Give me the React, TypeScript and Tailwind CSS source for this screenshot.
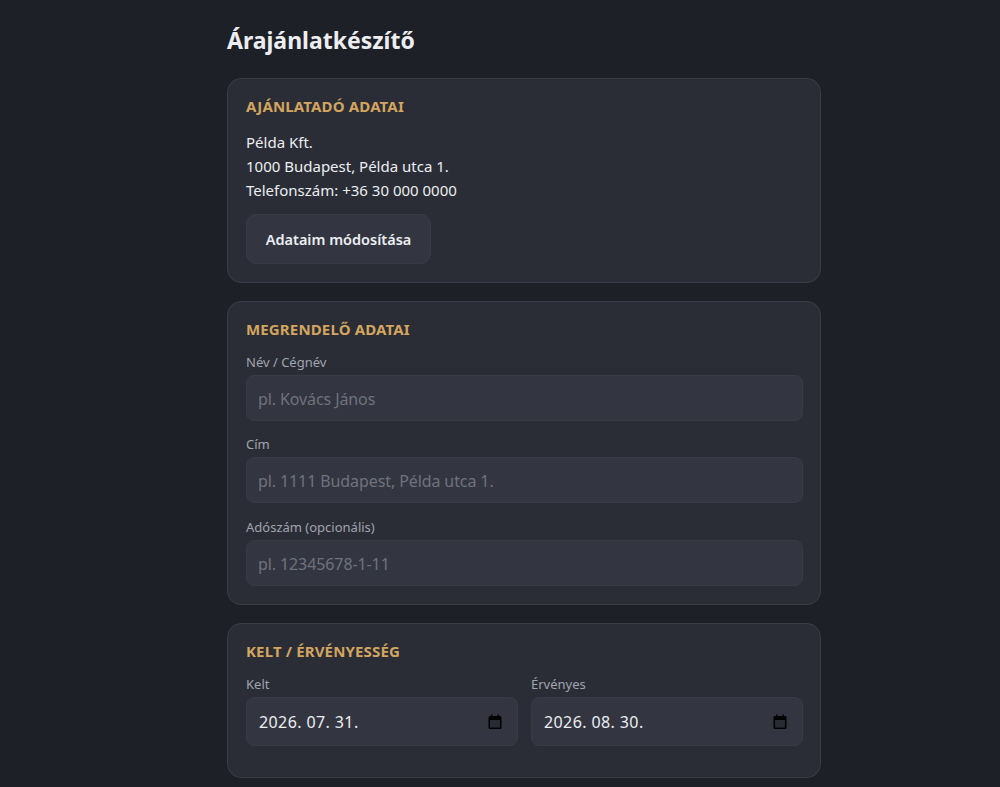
const font = { fontFamily: '"Noto Sans", "Open Sans", sans-serif' };

function Card({ title, className, children }: { title: string; className: string; children: React.ReactNode }) {
  return (
    <section className={`rounded-[14px] border border-[#3a3d47] bg-[#2a2d36] pr-[17px] pl-[18px] ${className}`}>
      <h2 className="text-[15px] leading-[20px] font-bold tracking-[0.15px] text-[#d4a55f] uppercase">{title}</h2>
      {children}
    </section>
  );
}

function Field({ label, placeholder, className }: { label: string; placeholder: string; className: string }) {
  return (
    <div className={className}>
      <label className="block h-[18px] text-[13px] leading-[20px] text-[#a0a4ae]">{label}</label>
      <input
        readOnly
        placeholder={placeholder}
        className="mt-[5px] block h-[46px] w-full rounded-[8px] border border-[#383b46] bg-[#333641] px-[11px] pt-[2px] text-[16px] tracking-[-0.1px] text-white outline-none placeholder:text-[#6f727c]"
      />
    </div>
  );
}

function CalendarIcon() {
  return (
    <svg width="16" height="16" viewBox="0 0 16 16" className="shrink-0">
      <rect x="3" y="6" width="10" height="7.5" fill="#000" fillOpacity="0.2" />
      <path
        d="M4 0.5h1.5V2h5V0.5H12V2h1a1.5 1.5 0 0 1 1.5 1.5v10A1.5 1.5 0 0 1 13 15H3a1.5 1.5 0 0 1-1.5-1.5v-10A1.5 1.5 0 0 1 3 2h1V0.5zM3 6v7.5h10V6H3z"
        fill="#000"
      />
    </svg>
  );
}

function DateField({ label, value }: { label: string; value: string }) {
  return (
    <div className="min-w-0 flex-1">
      <label className="block h-[18px] text-[13px] leading-[20px] text-[#a0a4ae]">{label}</label>
      <div className="mt-[5px] flex h-[49px] items-center justify-between rounded-[8px] border border-[#383b46] bg-[#333641] pr-[14px] pl-3 text-[16px] tracking-[0.4px] text-[#eceef1]">
        <span>{value}</span>
        <CalendarIcon />
      </div>
    </div>
  );
}

export default function App() {
  return (
    <div className="h-[787px] overflow-hidden bg-[#1e2028]" style={font}>
      <div className="ml-[227px] w-[594px] pt-[22px]">
        <h1 className="h-[38px] text-[23px] leading-[36px] font-bold text-[#eceef1]">Árajánlatkészítő</h1>

        <Card title="Ajánlatadó adatai" className="mt-[18px] h-[205px] pt-[17px]">
          <div className="mt-[14px] text-[15px] leading-[24px] text-[#eceef1]">
            <div>Példa Kft.</div>
            <div>1000 Budapest, Példa utca 1.</div>
            <div>Telefonszám: +36 30 000 0000</div>
          </div>
          <button className="mt-[12px] h-[50px] w-[185px] rounded-[10px] border border-[#383b46] bg-[#333641] pt-[2px] text-[14.5px] font-semibold text-[#eceef1]">
            Adataim módosítása
          </button>
        </Card>

        <Card title="Megrendelő adatai" className="mt-[18px] h-[304px] pt-[17px]">
          <Field label="Név / Cégnév" placeholder="pl. Kovács János" className="mt-[13px]" />
          <Field label="Cím" placeholder="pl. 1111 Budapest, Példa utca 1." className="mt-[13px]" />
          <Field label="Adószám (opcionális)" placeholder="pl. 12345678-1-11" className="mt-[14px]" />
        </Card>

        <Card title="Kelt / Érvényesség" className="mt-[18px] h-[155px] pt-[17px]">
          <div className="mt-[13px] flex gap-[13px]">
            <DateField label="Kelt" value="2026. 07. 31." />
            <DateField label="Érvényes" value="2026. 08. 30." />
          </div>
        </Card>
      </div>
    </div>
  );
}
